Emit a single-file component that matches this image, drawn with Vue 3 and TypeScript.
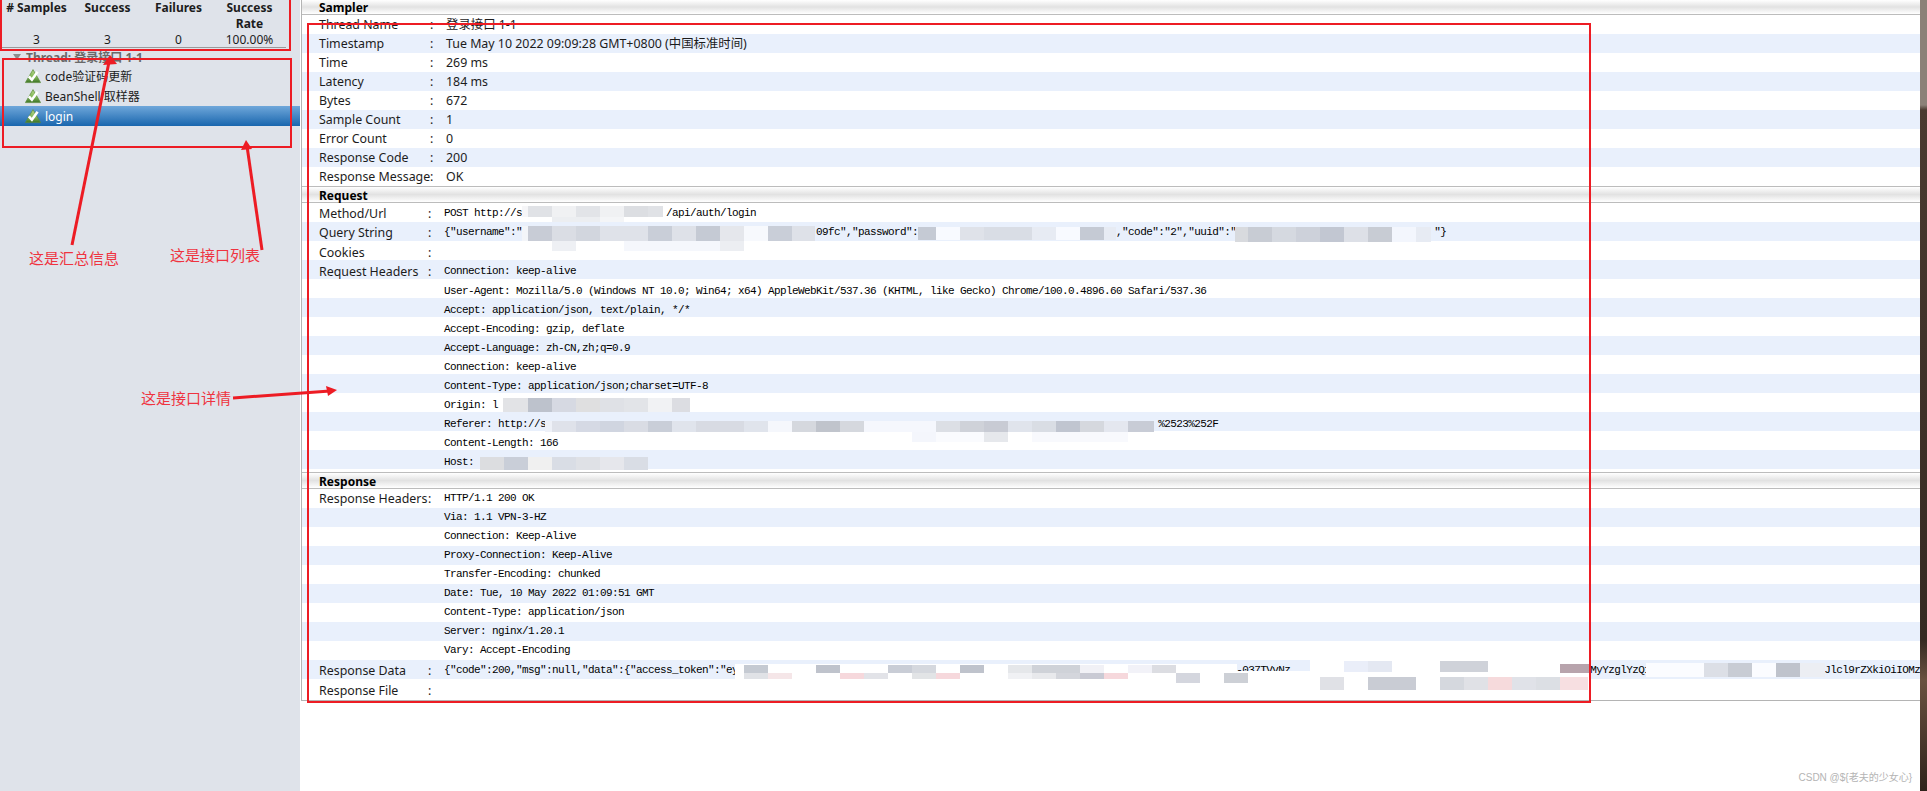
<script setup lang="ts">
type Row = { label?: string; value?: string; mono?: boolean }

// Lays text fragments out on a character grid; the gaps stay blank where the reference is masked.
function cols(parts: [number, string][]): string {
  let out = ''
  for (const [at, text] of parts) out = out.padEnd(at, ' ') + text
  return out
}

const columns = [
  { head: '# Samples', value: '3' },
  { head: 'Success', value: '3' },
  { head: 'Failures', value: '0' },
  { head: 'Success Rate', value: '100.00%' },
]
const samplers = [
  { name: 'code验证码更新', selected: false },
  { name: 'BeanShell 取样器', selected: false },
  { name: 'login', selected: true },
]

const samplerRows: Row[] = [
  { label: 'Thread Name', value: '登录接口 1-1' },
  { label: 'Timestamp', value: 'Tue May 10 2022 09:09:28 GMT+0800 (中国标准时间)' },
  { label: 'Time', value: '269 ms' },
  { label: 'Latency', value: '184 ms' },
  { label: 'Bytes', value: '672' },
  { label: 'Sample Count', value: '1' },
  { label: 'Error Count', value: '0' },
  { label: 'Response Code', value: '200' },
  { label: 'Response Message', value: 'OK' },
]
const requestRows: Row[] = [
  { label: 'Method/Url', value: cols([[0, 'POST http://s'], [37, '/api/auth/login']]), mono: true },
  { label: 'Query String', value: cols([[0, '{"username":"'], [62, '09fc","password":"'], [112, ',"code":"2","uuid":"'], [165, '"}']]), mono: true },
  { label: 'Cookies', value: '', mono: true },
  { label: 'Request Headers', value: 'Connection: keep-alive', mono: true },
  { value: 'User-Agent: Mozilla/5.0 (Windows NT 10.0; Win64; x64) AppleWebKit/537.36 (KHTML, like Gecko) Chrome/100.0.4896.60 Safari/537.36', mono: true },
  { value: 'Accept: application/json, text/plain, */*', mono: true },
  { value: 'Accept-Encoding: gzip, deflate', mono: true },
  { value: 'Accept-Language: zh-CN,zh;q=0.9', mono: true },
  { value: 'Connection: keep-alive', mono: true },
  { value: 'Content-Type: application/json;charset=UTF-8', mono: true },
  { value: 'Origin: l', mono: true },
  { value: cols([[0, 'Referer: http://s'], [119, '%2523%252F']]), mono: true },
  { value: 'Content-Length: 166', mono: true },
  { value: 'Host:', mono: true },
]
const responseRows: Row[] = [
  { label: 'Response Headers', value: 'HTTP/1.1 200 OK', mono: true },
  { value: 'Via: 1.1 VPN-3-HZ', mono: true },
  { value: 'Connection: Keep-Alive', mono: true },
  { value: 'Proxy-Connection: Keep-Alive', mono: true },
  { value: 'Transfer-Encoding: chunked', mono: true },
  { value: 'Date: Tue, 10 May 2022 01:09:51 GMT', mono: true },
  { value: 'Content-Type: application/json', mono: true },
  { value: 'Server: nginx/1.20.1', mono: true },
  { value: 'Vary: Accept-Encoding', mono: true },
  { label: 'Response Data', value: cols([[0, '{"code":200,"msg":null,"data":{"access_token":"ey'], [132, '-037TVvNz'], [191, 'MyYzglYzQ1'], [230, 'Jlcl9rZXkiOiIOMz']]), mono: true },
  { label: 'Response File', value: '', mono: true },
]
const sections = [
  { title: 'Sampler', rows: samplerRows, cls: 'first' },
  { title: 'Request', rows: requestRows, cls: 'req' },
  { title: 'Response', rows: responseRows, cls: 'resp' },
]

// Mosaic masks over the redacted values: [x, y, width, height, fill]
type Cell = [number, number, number, number, string]
function strip(y: number, h: number, cells: [number, number, string][]): Cell[] {
  return cells.map(([x, w, fill]) => [x, y, w, h, fill] as Cell)
}
const masks: Cell[] = [
  ...strip(206, 11, [[522, 6, '#f6f6f8'], [528, 24, '#e0e2e6'], [552, 24, '#f0f1f3'], [576, 24, '#e2e4e8'], [600, 24, '#f0f1f3'], [624, 24, '#dcdee2'], [648, 15, '#e0e2e6']]),
  ...strip(217, 5, [[552, 48, '#eceef1'], [600, 24, '#f4f5f7']]),
  ...strip(226, 15, [[522, 6, '#f3f5f9'], [528, 24, '#c8ccd6'], [552, 24, '#dadde4'], [576, 24, '#d2d6de'], [600, 24, '#dfe2e9'], [624, 24, '#dfe2e9'], [648, 24, '#c9ced8'], [672, 24, '#dee1e8'], [696, 24, '#c5cad4'], [720, 24, '#e5e7ec'], [744, 24, '#f7f9fd'], [768, 24, '#c9ced8'], [792, 23, '#dee1e8']]),
  ...strip(241, 10, [[552, 24, '#eef0f4'], [624, 96, '#f5f7fc'], [720, 24, '#eceef2']]),
  ...strip(227, 13, [[918, 18, '#c5cad4'], [936, 24, '#f8faff'], [960, 24, '#dfe2e9'], [984, 48, '#d9dde5'], [1032, 24, '#e7ebf3'], [1056, 24, '#f8faff'], [1080, 24, '#c5cad4'], [1104, 12, '#e7ebf3']]),
  ...strip(227, 15, [[1235, 13, '#d8dade'], [1248, 24, '#c8ccd4'], [1272, 24, '#d5d9e0'], [1296, 24, '#cdd1da'], [1320, 24, '#c2c7d2'], [1344, 24, '#dde0e7'], [1368, 24, '#c8ccd4'], [1392, 24, '#f3f6fd'], [1416, 15, '#e7ebf3']]),
  ...strip(398, 14, [[503, 25, '#e2e3e6'], [528, 24, '#bdc2cc'], [552, 24, '#d6d9e2'], [576, 24, '#dfdfe0'], [600, 24, '#dfe1e6'], [624, 24, '#e2e4e8'], [648, 24, '#f1f2f4'], [672, 18, '#dcdde2']]),
  ...strip(421, 11, [[545, 7, '#eef1f8'], [552, 24, '#dfe2ea'], [576, 24, '#d5d9e4'], [600, 24, '#d0d5e0'], [624, 24, '#d9dce4'], [648, 24, '#c9ced8'], [672, 24, '#e0e4ec'], [696, 48, '#d8dbe3'], [744, 24, '#e0e4ec'], [768, 24, '#f5f7fc'], [792, 24, '#d5d8de'], [816, 24, '#c0c4cc'], [840, 24, '#d5d8de'], [864, 72, '#f5f7fd'], [936, 24, '#dcdfe5'], [960, 24, '#cfd2d9'], [984, 24, '#c8cbd4'], [1008, 24, '#e0e4ec'], [1032, 24, '#d9dde4'], [1056, 24, '#c0c5d0'], [1080, 24, '#d5d8de'], [1104, 24, '#e4e7ef'], [1128, 26, '#c8ccd6']]),
  ...strip(432, 10, [[912, 24, '#f4f6fc'], [984, 24, '#e6e8ec'], [936, 48, '#fafbfe'], [1032, 96, '#f8f9fd']]),
  ...strip(457, 13, [[480, 24, '#dcdde0'], [504, 24, '#c9ced8'], [528, 24, '#f0f0f0'], [552, 24, '#d9dde5'], [576, 24, '#dfe1e6'], [600, 24, '#e6e7ec'], [624, 24, '#d9dde5']]),
  // Response Data mask
  [735, 664, 502, 16, '#ffffff'],
  [1310, 660, 280, 30, '#ffffff'],
  [1237, 671, 80, 9, '#ffffff'],
  ...strip(665, 8, [[744, 24, '#c5cad2'], [816, 24, '#bfc3cc'], [888, 24, '#c9cdd6'], [912, 24, '#d5d8de'], [960, 24, '#bfc3cc'], [1008, 24, '#e5e7ea'], [1032, 48, '#cfd2d8'], [1080, 24, '#f1f1f6'], [1128, 24, '#f2f2f8'], [1152, 24, '#dcdde2']]),
  ...strip(673, 6, [[744, 24, '#e0e2e6'], [768, 24, '#f5e6e8'], [840, 24, '#f6d8dc'], [864, 24, '#e2e3e8'], [912, 24, '#e2e4e6'], [936, 24, '#f6d8dc'], [1008, 24, '#f0f1f4'], [1032, 24, '#e8e9ec'], [1056, 24, '#d4d6dc'], [1080, 24, '#c9cad4'], [1104, 24, '#f6d8dc']]),
  ...strip(673, 10, [[1176, 24, '#d4d6de'], [1224, 24, '#cdd0d6']]),
  ...strip(661, 11, [[1344, 24, '#eaeef9'], [1368, 24, '#e4e8f2'], [1440, 48, '#cfd2d9']]),
  ...strip(677, 13, [[1320, 24, '#e0e1e6'], [1368, 48, '#c9ccd4'], [1440, 24, '#d5d8de'], [1464, 24, '#e0e1e6'], [1488, 24, '#f6dadc'], [1512, 24, '#e0e2e8'], [1536, 24, '#dcdfe4'], [1560, 28, '#f7dfe1']]),
  [1560, 664, 30, 9, '#b8a4ac'],
  ...strip(663, 14, [[1646, 58, '#fbfcff'], [1704, 24, '#dcdfe6'], [1728, 24, '#c8ccd4'], [1752, 24, '#fbfcff'], [1776, 24, '#bfc3cc'], [1800, 25, '#eceef3']]),
]

const lines = [
  { x: 1, y: -4, w: 289, h: 54 },
  { x: 3, y: 59, w: 288, h: 88 },
  { x: 308, y: 24, w: 1282, h: 678 },
]
const arrows = [
  { x1: 72, y1: 245, x2: 109, y2: 62, head: '110,55 103,65 117,64' },
  { x1: 262, y1: 250, x2: 247, y2: 146, head: '246,140 241,150 252,149' },
  { x1: 233, y1: 398, x2: 330, y2: 391, head: '337,390 326,386 328,396' },
]
const notes = [
  { x: 29, y: 264, text: '这是汇总信息' },
  { x: 170, y: 261, text: '这是接口列表' },
  { x: 141, y: 404, text: '这是接口详情' },
]
</script>

<template>
  <div class="page">
    <aside class="sidebar">
      <div class="totals">
        <div v-for="c in columns" :key="c.head" class="total">
          <div class="total-head">{{ c.head }}</div>
          <div class="total-value">{{ c.value }}</div>
        </div>
      </div>
      <div class="thread"><span class="caret"></span>Thread: 登录接口 1-1</div>
      <div v-for="s in samplers" :key="s.name" class="sampler" :class="{ selected: s.selected }">
        <svg class="ok" width="16" height="15" viewBox="0 0 16 15">
          <defs>
            <linearGradient id="okFill" x1="0" y1="0" x2="0" y2="1">
              <stop offset="0" stop-color="#b5d68a" />
              <stop offset=".6" stop-color="#7fb356" />
              <stop offset="1" stop-color="#3c7326" />
            </linearGradient>
          </defs>
          <path d="M8 .6 15.6 13.6H.4Z" fill="url(#okFill)" stroke="#5c8c3c" stroke-width=".7" stroke-linejoin="round" />
          <path d="M3.8 7.4 6.9 10.8 12.6 2.8" fill="none" stroke="#ffffff" stroke-width="2.6" />
        </svg>
        <span>{{ s.name }}</span>
      </div>
    </aside>

    <main class="detail">
      <section v-for="sec in sections" :key="sec.title" class="section" :class="sec.cls">
        <h2 class="section-title">{{ sec.title }}</h2>
        <div class="rows">
          <div v-for="(r, i) in sec.rows" :key="i" class="row">
            <span class="label">{{ r.label }}</span>
            <span class="colon">{{ r.label ? ':' : '' }}</span>
            <span class="value" :class="{ mono: r.mono }">{{ r.value }}</span>
          </div>
        </div>
      </section>
      <div class="watermark">CSDN @${老夫的少女心}</div>
    </main>

    <div class="edge"></div>

    <svg class="markup" width="1927" height="791" viewBox="0 0 1927 791">
      <rect v-for="(m, i) in masks" :key="i" :x="m[0]" :y="m[1]" :width="m[2]" :height="m[3]" :fill="m[4]" />
      <rect v-for="(l, i) in lines" :key="'l' + i" :x="l.x" :y="l.y" :width="l.w" :height="l.h" fill="none" stroke="#ed1c24" stroke-width="2" />
      <g v-for="(a, i) in arrows" :key="'a' + i">
        <line :x1="a.x1" :y1="a.y1" :x2="a.x2" :y2="a.y2" stroke="#ed1c24" stroke-width="3" />
        <polygon :points="a.head" fill="#ed1c24" />
      </g>
      <text v-for="n in notes" :key="n.text" :x="n.x" :y="n.y" class="note">{{ n.text }}</text>
    </svg>
  </div>
</template>

<style>
html, body { margin: 0; background: #fff; }
</style>

<style scoped>
.page {
  position: relative;
  display: flex;
  width: 1927px;
  height: 791px;
  overflow: hidden;
  font-family: "Noto Sans", "Noto Sans CJK SC", sans-serif;
  font-size: 12px;
  color: #1c1c1c;
  background: #fff;
}
.sidebar {
  flex: 0 0 300px;
  background: #dfe3ea;
  box-sizing: border-box;
}
.totals {
  display: grid;
  grid-template-columns: repeat(4, 71px);
  height: 47px;
  padding-left: 1px;
  margin: 0 14px 0 0;
  border-bottom: 1px solid #9a9a9a;
}
.total {
  display: flex;
  flex-direction: column;
  align-items: center;
  text-align: center;
  line-height: 16px;
}
.total-head {
  font-weight: 700;
  height: 32px;
  width: 62px;
  white-space: normal;
}
.total:first-child .total-head { width: 71px; white-space: nowrap; }
.total-value { line-height: 15px; }
.thread {
  display: flex;
  align-items: center;
  height: 18px;
  padding-left: 13px;
  font-weight: 700;
  color: #6a6a6a;
}
.caret {
  width: 0;
  height: 0;
  margin-right: 5px;
  border-left: 4px solid transparent;
  border-right: 4px solid transparent;
  border-top: 6px solid #8d8d8d;
}
.sampler {
  display: flex;
  align-items: center;
  height: 20px;
  padding-left: 25px;
  gap: 4px;
}
.sampler.selected {
  color: #fff;
  background: linear-gradient(#6fa7da, #1966ae);
}
.detail {
  position: relative;
  flex: 1;
  min-width: 0;
  margin-left: 1px;
  height: 700px;
  border-left: 1px solid #b4b4b4;
  border-bottom: 1px solid #b4b4b4;
}
.section-title {
  margin: 0;
  height: 15px;
  padding-left: 17px;
  font-size: 12px;
  line-height: 15px;
  font-weight: 700;
  color: #000;
  background: linear-gradient(#fff, #e2e2e2 50%, #fff);
  border-bottom: 1px solid #bcbcbc;
  box-sizing: border-box;
}
.section.req .section-title,
.section.resp .section-title {
  height: 17px;
  line-height: 17px;
  border-top: 1px solid #bcbcbc;
}
.section.resp { margin-top: 3px; }
.row {
  display: grid;
  grid-template-columns: 111px 16px 1fr;
  height: 19px;
  padding-left: 17px;
  font-size: 12.4px;
  line-height: 19px;
  white-space: pre;
  overflow: hidden;
}
.section.req .row,
.section.resp .row { grid-template-columns: 109px 16px 1fr; }
.section.req .row { line-height: 25px; }
.section.req .row:nth-child(1) { line-height: 21px; }
.section.req .row:nth-child(2) { line-height: 21px; }
.section.req .row:nth-child(3),
.section.req .row:nth-child(4) { line-height: 23px; }
.section.resp .row:nth-child(10) { line-height: 21px; }
.section.resp .row:nth-child(11) { line-height: 23px; }
.row:nth-child(even) { background: #e9f0fc; }
.mono {
  font-family: "Liberation Mono", monospace;
  font-size: 11px;
  letter-spacing: -0.6px;
  color: #000;
}
.watermark {
  position: absolute;
  right: 8px;
  top: 769px;
  font-family: "Liberation Sans", "Noto Sans CJK SC", sans-serif;
  font-size: 10px;
  color: #b4b4b4;
  white-space: nowrap;
}
.edge {
  flex: 0 0 7px;
  background: linear-gradient(#8b8178 0, #8b8178 105px, #4a3a30 110px, #352a22 640px, #6a5240 680px, #2f231b 791px);
}
.markup {
  position: absolute;
  left: 0;
  top: 0;
  pointer-events: none;
}
.note {
  font-family: "Noto Sans CJK SC", sans-serif;
  font-size: 15px;
  fill: #ef3340;
}
</style>
